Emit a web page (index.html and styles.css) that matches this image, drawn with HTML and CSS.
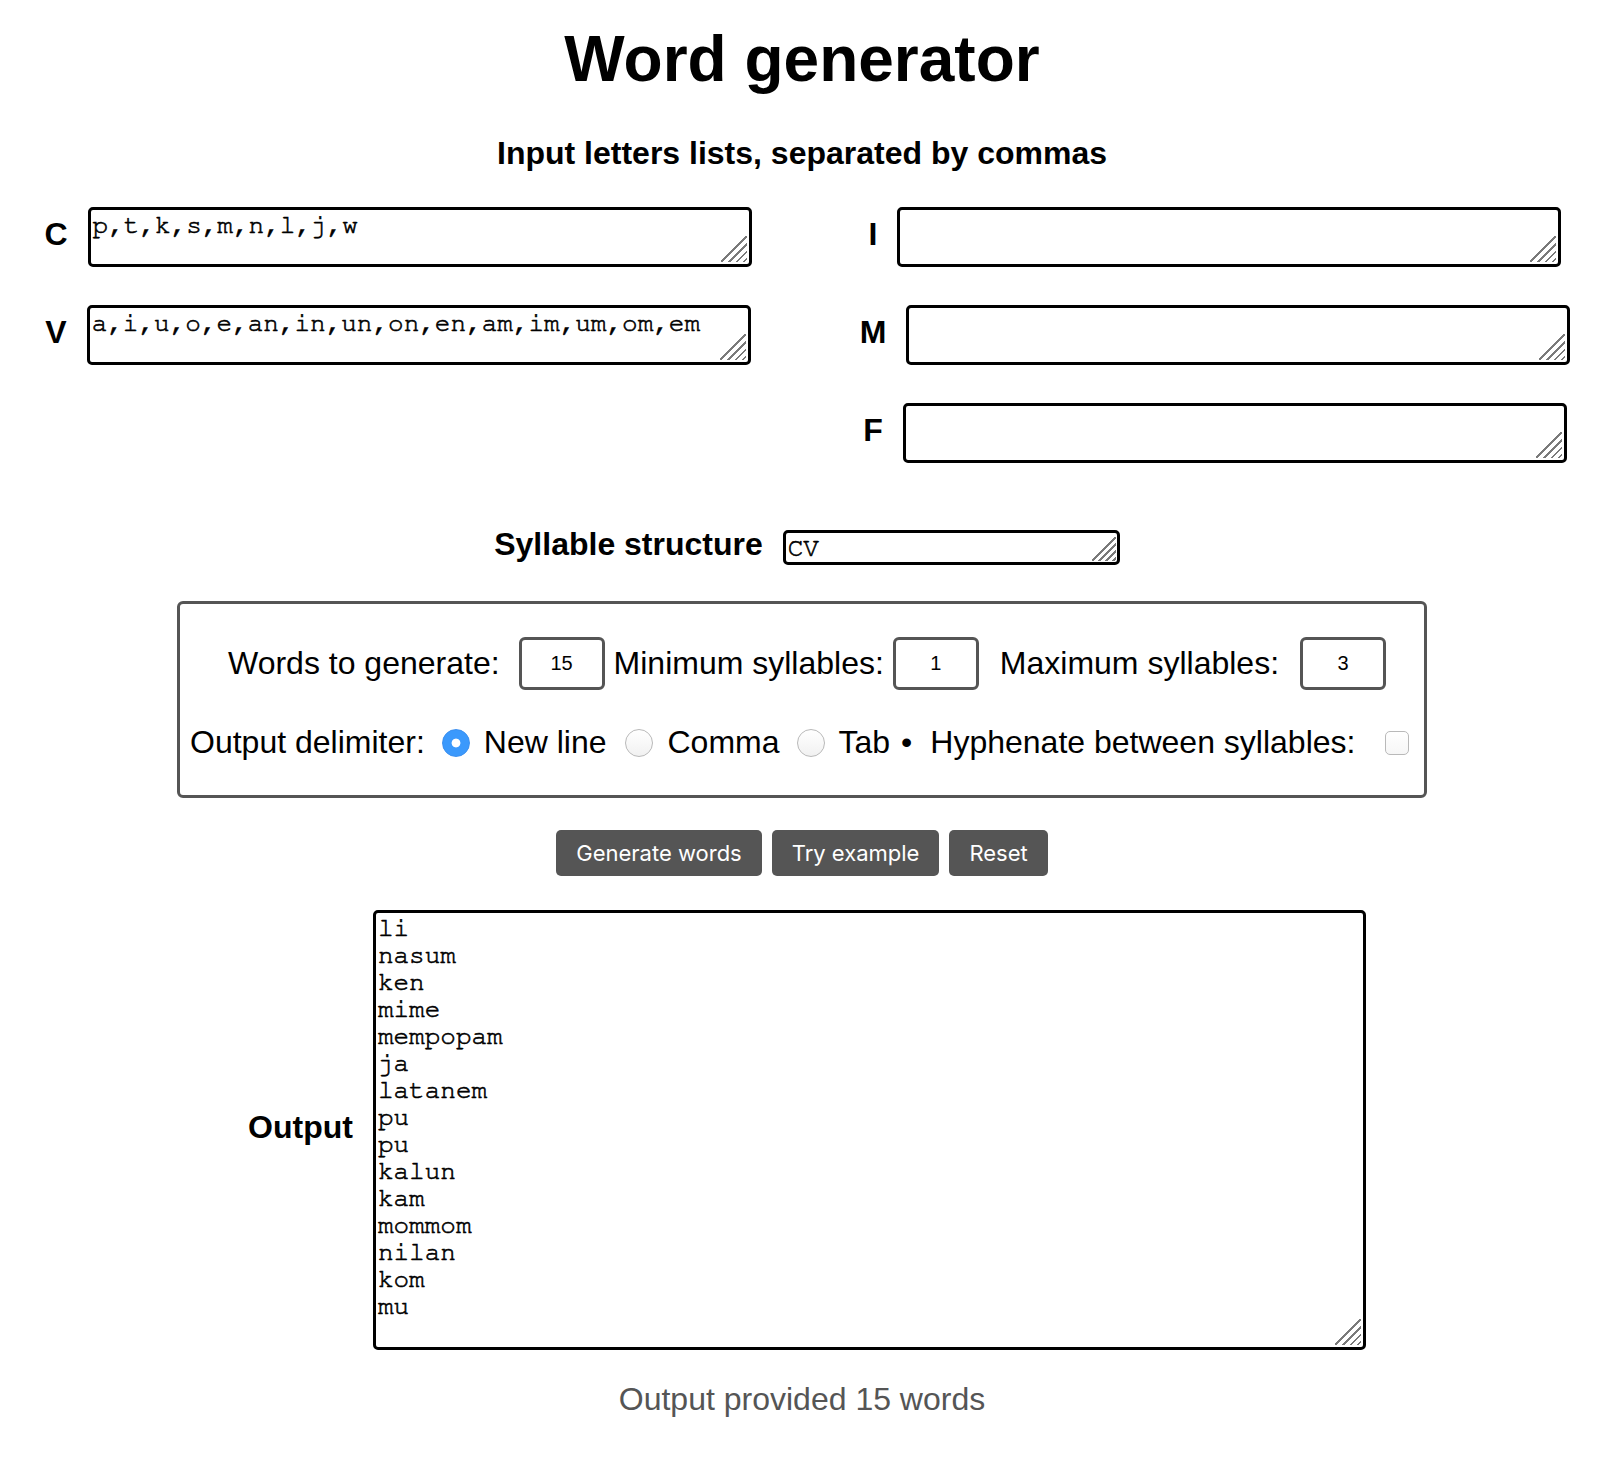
FILE: index.html
```html
<!DOCTYPE html>
<html lang="en">
<head>
<meta charset="utf-8">
<title>Word generator</title>
<link rel="stylesheet" href="styles.css">
</head>
<body>
<main class="page">
  <h1 class="title">Word generator</h1>
  <h2 class="subtitle">Input letters lists, separated by commas</h2>

  <section class="letters">
    <div class="letters-col">
      <div class="field"><label class="field-label" for="c">C</label><span class="ta-wrap"><textarea id="c" class="ta ta-letters" spellcheck="false">p,t,k,s,m,n,l,j,w</textarea><span class="grip" aria-hidden="true"></span></span></div>
      <div class="field"><label class="field-label" for="v">V</label><span class="ta-wrap"><textarea id="v" class="ta ta-letters" spellcheck="false">a,i,u,o,e,an,in,un,on,en,am,im,um,om,em</textarea><span class="grip" aria-hidden="true"></span></span></div>
    </div>
    <div class="letters-col">
      <div class="field"><label class="field-label" for="i">I</label><span class="ta-wrap"><textarea id="i" class="ta ta-letters" spellcheck="false"></textarea><span class="grip" aria-hidden="true"></span></span></div>
      <div class="field"><label class="field-label" for="m">M</label><span class="ta-wrap"><textarea id="m" class="ta ta-letters" spellcheck="false"></textarea><span class="grip" aria-hidden="true"></span></span></div>
      <div class="field"><label class="field-label" for="f">F</label><span class="ta-wrap"><textarea id="f" class="ta ta-letters" spellcheck="false"></textarea><span class="grip" aria-hidden="true"></span></span></div>
    </div>
  </section>

  <div class="field syllable"><label class="field-label" for="syl">Syllable structure</label><span class="ta-wrap"><textarea id="syl" class="ta ta-syllable" spellcheck="false">CV</textarea><span class="grip grip-sm" aria-hidden="true"></span></span></div>

  <section class="settings">
    <div class="counts">
      <span class="count-text t1">Words to generate:</span><input class="num n1" type="number" value="15">
      <span class="count-text t2">Minimum syllables:</span><input class="num n2" type="number" value="1">
      <span class="count-text t3">Maximum syllables:</span><input class="num n3" type="number" value="3">
    </div>
    <div class="delims">
      <span class="delim-text">Output delimiter:</span>
      <label class="choice c1"><input class="radio" type="radio" name="delim" checked><span>New line</span></label>
      <label class="choice c2"><input class="radio" type="radio" name="delim"><span>Comma</span></label>
      <label class="choice c3"><input class="radio" type="radio" name="delim"><span>Tab</span></label>
      <span class="bullet">•</span>
      <label class="hyph"><span>Hyphenate between syllables:</span><input class="check" type="checkbox"></label>
    </div>
  </section>

  <div class="actions">
    <button class="btn" type="button">Generate words</button>
    <button class="btn" type="button">Try example</button>
    <button class="btn" type="button">Reset</button>
  </div>

  <div class="field output"><label class="field-label" for="out">Output</label><span class="ta-wrap"><textarea id="out" class="ta ta-output" spellcheck="false">li
nasum
ken
mime
mempopam
ja
latanem
pu
pu
kalun
kam
mommom
nilan
kom
mu</textarea><span class="grip" aria-hidden="true"></span></span></div>

  <p class="status">Output provided 15 words</p>
</main>
</body>
</html>
```

FILE: styles.css
```css
* {
  box-sizing: border-box;
}

body {
  margin: 0;
  background: #fff;
  color: #000;
  font-family: "Liberation Sans", Arial, sans-serif;
}

.page {
  padding-left: 4px;
}

.title {
  margin: 23px 0 0;
  font-size: 64px;
  line-height: 72px;
  font-weight: 700;
  text-align: center;
}

.subtitle {
  margin: 40px 0 0;
  font-size: 32px;
  line-height: 36px;
  font-weight: 700;
  text-align: center;
}

.letters {
  display: grid;
  grid-template-columns: 788px 1fr;
  column-gap: 38px;
  margin-top: 36px;
}

.letters-col {
  display: flex;
  flex-direction: column;
  align-items: center;
  gap: 38px;
}

.field {
  display: flex;
  align-items: center;
}

.field-label {
  font-size: 32px;
  font-weight: 700;
  margin: 0 20px 6px 0;
}

.ta-wrap {
  position: relative;
  display: flex;
}

.ta {
  margin: 0;
  padding: 2px;
  font-family: "Nimbus Mono PS", "Nimbus Mono L", FreeMono, "Liberation Mono", "Courier New", monospace;
  font-size: 26px;
  line-height: 27px;
  color: #000;
  -webkit-text-stroke: 0.6px #000;
  background: #fff;
  border: 3px solid #000;
  border-radius: 5px;
  outline: none;
  resize: none;
  overflow: hidden;
}

.grip {
  position: absolute;
  right: 5px;
  bottom: 5px;
  width: 26px;
  height: 26px;
  pointer-events: none;
  background: linear-gradient(135deg,
    transparent 0 47%,
    #7a7a7a 47% 52.5%,
    transparent 52.5% 62%,
    #7a7a7a 62% 67.5%,
    transparent 67.5% 77%,
    #7a7a7a 77% 82.5%,
    transparent 82.5% 91%,
    #7a7a7a 91% 96%,
    transparent 96%);
}

.grip-sm {
  width: 24px;
  height: 24px;
  right: 4px;
  bottom: 4px;
}

.ta-letters {
  width: 664px;
  height: 60px;
}

.syllable {
  justify-content: center;
  margin-top: 63px;
  padding-left: 10px;
}

.ta-syllable {
  width: 337px;
  height: 35px;
}

.settings {
  width: 1250px;
  margin: 32px auto 0;
  border: 3px solid #555;
  border-radius: 6px;
  padding: 33px 0 34px;
}

.counts {
  display: flex;
  align-items: center;
  padding-left: 48px;
  font-size: 32px;
}

.num {
  width: 86px;
  height: 53px;
  margin: 0;
  padding: 0;
  border: 3px solid #555;
  border-radius: 6px;
  background: #fff;
  color: #000;
  font-family: "Liberation Sans", Arial, sans-serif;
  font-size: 20px;
  text-align: center;
  -moz-appearance: textfield;
}

.num::-webkit-inner-spin-button,
.num::-webkit-outer-spin-button {
  -webkit-appearance: none;
  margin: 0;
}

.t1 { margin-right: 19px; }
.n1 { margin-right: 9px; }
.t2 { margin-right: 9px; }
.n2 { margin-right: 21px; }
.t3 { margin-right: 21px; }

.delims {
  display: flex;
  align-items: center;
  margin-top: 34px;
  padding-left: 10px;
  font-size: 32px;
  line-height: 37px;
}

.delim-text {
  margin-right: 17px;
}

.choice {
  display: flex;
  align-items: center;
  gap: 14px;
}

.c1 { margin-right: 19px; }
.c2 { margin-right: 17px; }
.c3 { margin-right: 11px; }

.bullet {
  margin-right: 18px;
}

.hyph {
  display: flex;
  align-items: center;
  gap: 30px;
}

.radio {
  -webkit-appearance: none;
  appearance: none;
  width: 28px;
  height: 28px;
  margin: 0;
  border: 1px solid #b9b9b9;
  border-radius: 50%;
  background: linear-gradient(#ffffff, #f1f1f1);
}

.radio:checked {
  border-color: #3a8ff0;
  background: radial-gradient(circle at center, #fff 0 4px, #3b99fc 4.8px);
}

.check {
  -webkit-appearance: none;
  appearance: none;
  width: 24px;
  height: 24px;
  margin: 0;
  border: 1px solid #b9b9b9;
  border-radius: 5px;
  background: linear-gradient(#ffffff, #f6f6f6);
}

.actions {
  display: flex;
  justify-content: center;
  gap: 10px;
  margin-top: 32px;
}

.btn {
  height: 46px;
  padding: 0 20px;
  border: 0;
  border-radius: 5px;
  background: #555;
  color: #fff;
  font-family: Inter, "Liberation Sans", sans-serif;
  font-size: 22px;
}

.output {
  justify-content: center;
  margin-top: 34px;
  padding-left: 10px;
}

.ta-output {
  width: 993px;
  height: 440px;
}

.status {
  margin: 31px 0 0;
  text-align: center;
  font-size: 32px;
  color: #555;
}
```
